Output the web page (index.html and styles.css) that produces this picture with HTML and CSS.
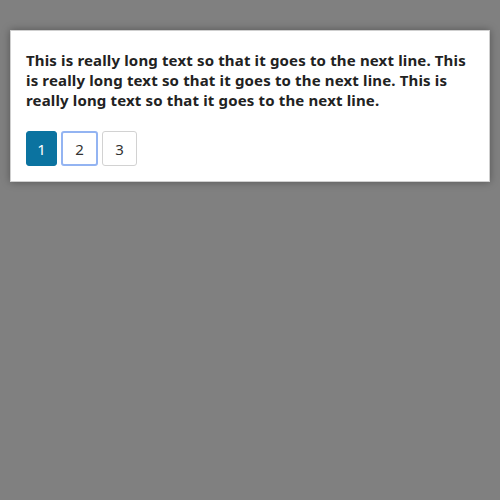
FILE: index.html
```html
<!DOCTYPE html>
<html>
<head>
<meta charset="utf-8">
<link rel="stylesheet" href="styles.css">
</head>
<body>
<div class="card">
  <p class="message">This is really long text so that it goes to the next line. This is really long text so that it goes to the next line. This is really long text so that it goes to the next line.</p>
  <div class="pager">
    <button class="page active">1</button>
    <button class="page focused">2</button>
    <button class="page">3</button>
  </div>
</div>
</body>
</html>
```
FILE: styles.css
```css
html, body {
  margin: 0;
  padding: 0;
  background: #808080;
}
body {
  padding: 30px 10px;
  font-family: "Noto Sans", "Open Sans", sans-serif;
}
.card {
  background: #fff;
  border: 1px solid #cfcfcf;
  box-shadow: 0 0 8px rgba(0, 0, 0, 0.35);
  padding: 19px 15px 15px;
}
.message {
  margin: 0 0 21px;
  font-size: 15px;
  line-height: 20px;
  font-weight: 700;
  color: #222;
  letter-spacing: 0.15px;
}
.pager {
  display: flex;
  gap: 4px;
}
.page {
  height: 35px;
  width: 35px;
  box-sizing: border-box;
  border: 1px solid #d2d2d2;
  border-radius: 3px;
  background: #fff;
  color: #333;
  font-family: "Noto Sans", sans-serif;
  font-size: 15px;
  padding: 0;
  margin: 0;
}
.page.active {
  width: 31px;
  background: #0b73a0;
  border-color: #0b73a0;
  color: #fff;
}
.page.focused {
  border: 2px solid #93b4f2;
  width: 37px;
}
```
